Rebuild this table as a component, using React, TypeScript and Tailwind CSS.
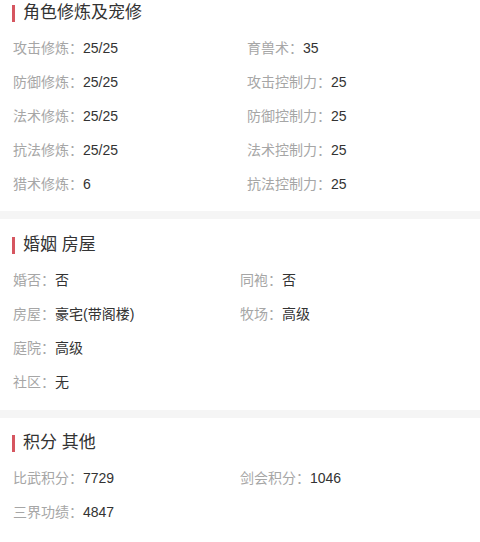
import React from 'react';

type Item = { label: string; value: string };

const sections: { title: string; col: string; pt: string; pb: string; items: Item[] }[] = [
    {
        title: '角色修炼及宠修',
        col: 'grid-cols-[234px_1fr]',
        pt: 'pt-0',
        pb: 'pb-[10px]',
        items: [
            { label: '攻击修炼', value: '25/25' },
            { label: '育兽术', value: '35' },
            { label: '防御修炼', value: '25/25' },
            { label: '攻击控制力', value: '25' },
            { label: '法术修炼', value: '25/25' },
            { label: '防御控制力', value: '25' },
            { label: '抗法修炼', value: '25/25' },
            { label: '法术控制力', value: '25' },
            { label: '猎术修炼', value: '6' },
            { label: '抗法控制力', value: '25' },
        ],
    },
    {
        title: '婚姻 房屋',
        col: 'grid-cols-[227px_1fr]',
        pt: 'pt-[13px]',
        pb: 'pb-[11px]',
        items: [
            { label: '婚否', value: '否' },
            { label: '同袍', value: '否' },
            { label: '房屋', value: '豪宅(带阁楼)' },
            { label: '牧场', value: '高级' },
            { label: '庭院', value: '高级' },
            { label: '', value: '' },
            { label: '社区', value: '无' },
        ],
    },
    {
        title: '积分 其他',
        col: 'grid-cols-[227px_1fr]',
        pt: 'pt-[12px]',
        pb: 'pb-[12px]',
        items: [
            { label: '比武积分', value: '7729' },
            { label: '剑会积分', value: '1046' },
            { label: '三界功绩', value: '4847' },
        ],
    },
];

export default function App() {
    return (
        <div
            className="w-[480px] min-h-[542px] bg-white text-[14px]"
            style={{ fontFamily: '"Liberation Sans", "Noto Sans CJK SC", sans-serif' }}
        >
            {sections.map((section, index) => (
                <div key={section.title}>
                    {index > 0 && <div className="h-[8px] bg-[#f5f5f5]" />}
                    <div className={`${section.pt} ${section.pb}`}>
                        {/* Section title */}
                        <div className="flex h-[26px] items-center pl-[12px]">
                            <span className="h-[17px] w-[3px] bg-[#d65660]" />
                            <span className="ml-[8px] text-[17px] text-[#333333]">{section.title}</span>
                        </div>
                        <div className={`mt-[5px] grid pl-[13px] ${section.col}`}>
                            {section.items.map((item, i) => (
                                <div key={i} className="flex h-[34px] items-center whitespace-nowrap">
                                    {item.label && (
                                        <>
                                            <span className="text-[#a6a6a6]">{item.label}：</span>
                                            <span className="text-[#333333]">{item.value}</span>
                                        </>
                                    )}
                                </div>
                            ))}
                        </div>
                    </div>
                </div>
            ))}
        </div>
    );
}
